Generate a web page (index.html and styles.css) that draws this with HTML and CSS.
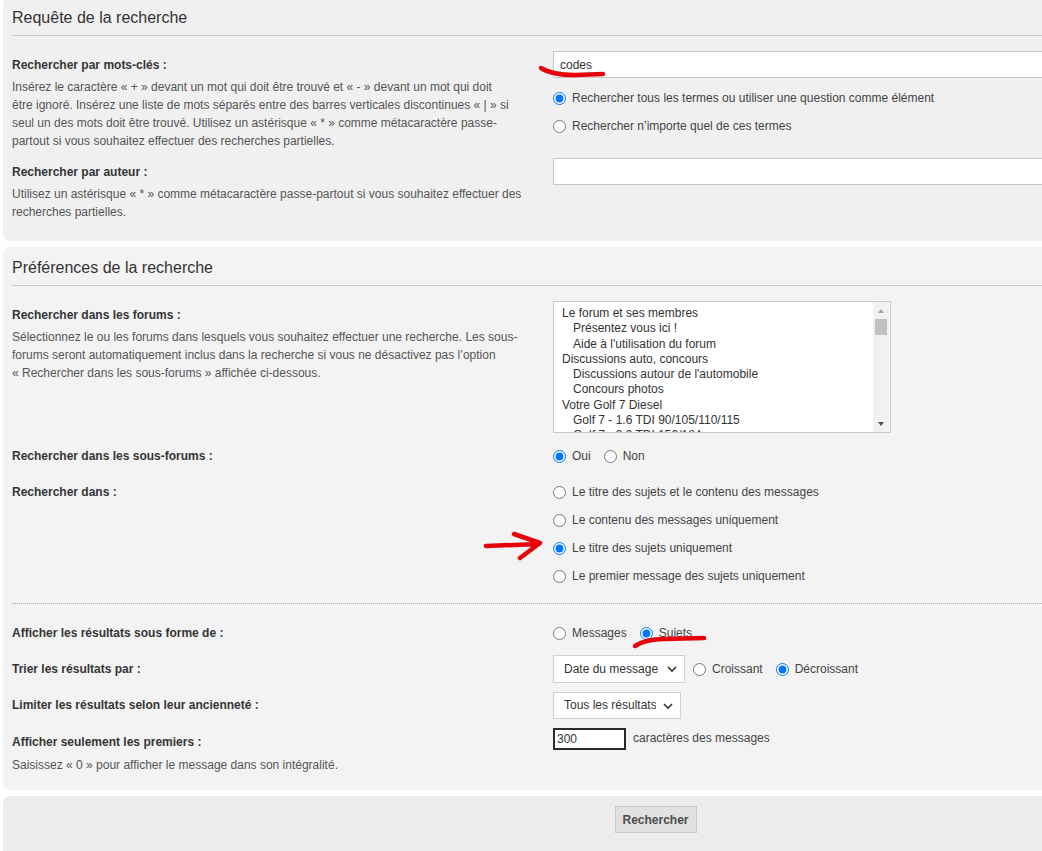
FILE: index.html
```html
<!DOCTYPE html>
<html lang="fr">
<head>
<meta charset="utf-8">
<title>Rechercher</title>
<link rel="stylesheet" href="styles.css">
</head>
<body>
<div class="page">
  <div class="panel panel-query">
    <h3>Requête de la recherche</h3>
    <fieldset>
      <dl>
        <dt>
          <label>Rechercher par mots-clés :</label>
          <span class="explain">Insérez le caractère «&nbsp;+&nbsp;» devant un mot qui doit être trouvé et «&nbsp;-&nbsp;» devant un mot qui doit<br>être ignoré. Insérez une liste de mots séparés entre des barres verticales discontinues «&nbsp;|&nbsp;» si<br>seul un des mots doit être trouvé. Utilisez un astérisque «&nbsp;*&nbsp;» comme métacaractère passe-<br>partout si vous souhaitez effectuer des recherches partielles.</span>
        </dt>
        <dd>
          <input class="inputbox" type="text" value="codes">
          <div class="radio-list spaced">
            <label class="radio-row"><input type="radio" name="terms" checked>Rechercher tous les termes ou utiliser une question comme élément</label>
            <label class="radio-row"><input type="radio" name="terms">Rechercher n’importe quel de ces termes</label>
          </div>
        </dd>
      </dl>
      <dl>
        <dt>
          <label>Rechercher par auteur :</label>
          <span class="explain">Utilisez un astérisque «&nbsp;*&nbsp;» comme métacaractère passe-partout si vous souhaitez effectuer des recherches partielles.</span>
        </dt>
        <dd><input class="inputbox" type="text" value=""></dd>
      </dl>
    </fieldset>
  </div>

  <div class="panel panel-prefs">
    <h3>Préférences de la recherche</h3>
    <fieldset>
      <dl class="row-forums">
        <dt>
          <label>Rechercher dans les forums :</label>
          <span class="explain">Sélectionnez le ou les forums dans lesquels vous souhaitez effectuer une recherche. Les sous-forums seront automatiquement inclus dans la recherche si vous ne désactivez pas l’option «&nbsp;Rechercher dans les sous-forums&nbsp;» affichée ci-dessous.</span>
        </dt>
        <dd>
          <div class="forum-list">
            <div class="forum-options">
              <div class="opt">Le forum et ses membres</div>
              <div class="opt sub">Présentez vous ici !</div>
              <div class="opt sub">Aide à l'utilisation du forum</div>
              <div class="opt">Discussions auto, concours</div>
              <div class="opt sub">Discussions autour de l'automobile</div>
              <div class="opt sub">Concours photos</div>
              <div class="opt">Votre Golf 7 Diesel</div>
              <div class="opt sub">Golf 7 - 1.6 TDI 90/105/110/115</div>
              <div class="opt sub">Golf 7 - 2.0 TDI 150/184</div>
            </div>
            <div class="scrollbar">
              <span class="sb-btn"><span class="tri up"></span></span>
              <span class="thumb"></span>
              <span class="sb-track"></span>
              <span class="sb-btn"><span class="tri down"></span></span>
            </div>
          </div>
        </dd>
      </dl>
      <dl>
        <dt><label>Rechercher dans les sous-forums :</label></dt>
        <dd class="inline">
          <label><input type="radio" name="sub" checked>Oui</label>
          <label><input type="radio" name="sub">Non</label>
        </dd>
      </dl>
      <dl>
        <dt><label>Rechercher dans :</label></dt>
        <dd>
          <label class="radio-row"><input type="radio" name="fields">Le titre des sujets et le contenu des messages</label>
          <label class="radio-row"><input type="radio" name="fields">Le contenu des messages uniquement</label>
          <label class="radio-row"><input type="radio" name="fields" checked>Le titre des sujets uniquement</label>
          <label class="radio-row"><input type="radio" name="fields">Le premier message des sujets uniquement</label>
        </dd>
      </dl>

      <div class="separator"></div>

      <dl>
        <dt><label>Afficher les résultats sous forme de :</label></dt>
        <dd class="inline">
          <label><input type="radio" name="show">Messages</label>
          <label><input type="radio" name="show" checked>Sujets</label>
        </dd>
      </dl>
      <dl>
        <dt><label>Trier les résultats par :</label></dt>
        <dd class="inline">
          <span class="select select-sort">
            <select><option>Date du message</option></select>
            <svg class="chev" width="10" height="7" viewBox="0 0 10 7"><polyline points="1,1 5,5 9,1" fill="none" stroke="#333" stroke-width="1.6"/></svg>
          </span>
          <label><input type="radio" name="dir">Croissant</label>
          <label><input type="radio" name="dir" checked>Décroissant</label>
        </dd>
      </dl>
      <dl>
        <dt><label>Limiter les résultats selon leur ancienneté :</label></dt>
        <dd class="inline">
          <span class="select select-age">
            <select><option>Tous les résultats</option></select>
            <svg class="chev" width="10" height="7" viewBox="0 0 10 7"><polyline points="1,1 5,5 9,1" fill="none" stroke="#333" stroke-width="1.6"/></svg>
          </span>
        </dd>
      </dl>
      <dl class="row-chars">
        <dt>
          <label>Afficher seulement les premiers :</label>
          <span class="explain">Saisissez «&nbsp;0&nbsp;» pour afficher le message dans son intégralité.</span>
        </dt>
        <dd class="chars">
          <input class="short" type="text" value="300">
          <span>caractères des messages</span>
        </dd>
      </dl>
    </fieldset>
  </div>

  <div class="panel panel-submit">
    <button class="button" type="button">Rechercher</button>
  </div>

  <svg class="marks" width="1042" height="851" viewBox="0 0 1042 851">
    <path d="M541 71 Q552 78 575 78 L603 77" />
    <path d="M486 549 L539 547 M514 537 L540 546 L520 561" />
    <path d="M635 649 Q646 642 664 642 L704 641" />
  </svg>
</div>
</body>
</html>
```

FILE: styles.css
```css
html {
  overflow: hidden;
}

body {
  margin: 0;
  background: #ffffff;
  font-family: "Liberation Sans", Arial, sans-serif;
  font-size: 12px;
  color: #333333;
}

.page {
  position: relative;
  width: 1308px;
}

.panel {
  margin: 0 0 6px 3px;
  padding: 11px 10px 12px 9px;
  border-radius: 7px;
  background: #f0f0f0;
}

.panel-query {
  margin-top: -3px;
  background: #f0f0f0;
}

.panel-prefs {
  background: #f3f3f3;
  padding-bottom: 8px;
}

.panel-submit {
  background: #ececec;
  padding: 10px 0 30px;
  text-align: center;
}

h3 {
  margin: 0;
  padding-bottom: 7px;
  border-bottom: 1px solid #cccccc;
  font-size: 16px;
  font-weight: normal;
  line-height: 20px;
  color: #333333;
}

fieldset {
  border: 0;
  margin: 15px 0 0;
  padding: 0;
}

dl {
  display: flex;
  margin: 0 0 8px;
}

dt {
  flex: none;
  width: 520px;
  padding-top: 5px;
}

dd {
  flex: 1;
  margin: 0 0 0 21px;
}

dt label {
  display: block;
  font-weight: bold;
  line-height: 18px;
  color: #353535;
}

.explain {
  display: block;
  margin-top: 4px;
  line-height: 18px;
  color: #555555;
}

.inputbox {
  display: block;
  box-sizing: border-box;
  width: 100%;
  height: 27px;
  margin: 0;
  padding: 0 6px;
  border: 1px solid #c8c8c8;
  background: #ffffff;
  font: 12px "Liberation Sans", Arial, sans-serif;
  color: #333333;
}

.spaced {
  margin-top: 6px;
}

.radio-row {
  display: flex;
  align-items: center;
  height: 28px;
  color: #444444;
}

input[type="radio"] {
  width: 13px;
  height: 13px;
  margin: 0 6px 0 0;
  flex: none;
}

.inline {
  display: flex;
  align-items: center;
  height: 28px;
  color: #444444;
}

.inline label {
  display: inline-flex;
  align-items: center;
  margin-right: 13px;
}

.row-forums {
  margin-bottom: 9px;
}

.forum-list {
  display: flex;
  box-sizing: border-box;
  width: 338px;
  height: 132px;
  border: 1px solid #c8c8c8;
  background: #ffffff;
  overflow: hidden;
}

.forum-options {
  flex: 1;
  padding: 4px 0 0 8px;
  overflow: hidden;
  color: #333333;
}

.opt {
  line-height: 15.3px;
  white-space: nowrap;
}

.opt.sub {
  padding-left: 11px;
}

.scrollbar {
  display: flex;
  flex-direction: column;
  width: 16px;
  margin-right: 1px;
  background: #f1f1f1;
}

.sb-btn {
  display: flex;
  align-items: center;
  justify-content: center;
  height: 17px;
  flex: none;
}

.tri {
  width: 0;
  height: 0;
  border-left: 3.5px solid transparent;
  border-right: 3.5px solid transparent;
}

.tri.up {
  border-bottom: 4px solid #a3a3a3;
}

.tri.down {
  border-top: 4px solid #505050;
}

.thumb {
  height: 16px;
  margin: 0 2px;
  background: #c1c1c1;
  flex: none;
}

.sb-track {
  flex: 1;
}

.separator {
  margin: 13px 0 15px;
  border-top: 1px dotted #b0b0b0;
}

.select {
  position: relative;
  display: inline-block;
  margin-right: 8px;
}

.select select {
  appearance: none;
  -webkit-appearance: none;
  box-sizing: border-box;
  height: 28px;
  margin: 0;
  padding: 0 24px 0 10px;
  border: 1px solid #d0d0d0;
  border-radius: 0;
  background: #ffffff;
  font: 12px "Liberation Sans", Arial, sans-serif;
  color: #333333;
  display: block;
}

.select-sort select {
  width: 132px;
}

.select-age select {
  width: 128px;
  height: 27px;
}

.chev {
  position: absolute;
  right: 8px;
  top: 11px;
  pointer-events: none;
}

.row-chars {
  padding-top: 1px;
}

.row-chars .explain {
  margin-top: 5px;
}

.chars {
  display: flex;
  align-items: flex-start;
  color: #444444;
}

.chars span {
  margin-left: 7px;
  line-height: 20px;
}

.short {
  box-sizing: border-box;
  width: 73px;
  height: 22px;
  margin: 0;
  padding: 0 2px;
  border: 2px solid #2a2a2a;
  background: #ffffff;
  font: 12px "Liberation Sans", Arial, sans-serif;
  color: #333333;
}

.button {
  box-sizing: border-box;
  width: 82px;
  height: 27px;
  padding: 0;
  border: 1px solid #c8c8c8;
  border-radius: 0;
  background: #e1e1e1;
  font: bold 12px "Liberation Sans", Arial, sans-serif;
  color: #4c4c4c;
}

.marks {
  position: absolute;
  left: 0;
  top: 0;
  pointer-events: none;
}

.marks path {
  fill: none;
  stroke: #e8000b;
  stroke-width: 4.5;
  stroke-linecap: round;
  stroke-linejoin: round;
}
```
